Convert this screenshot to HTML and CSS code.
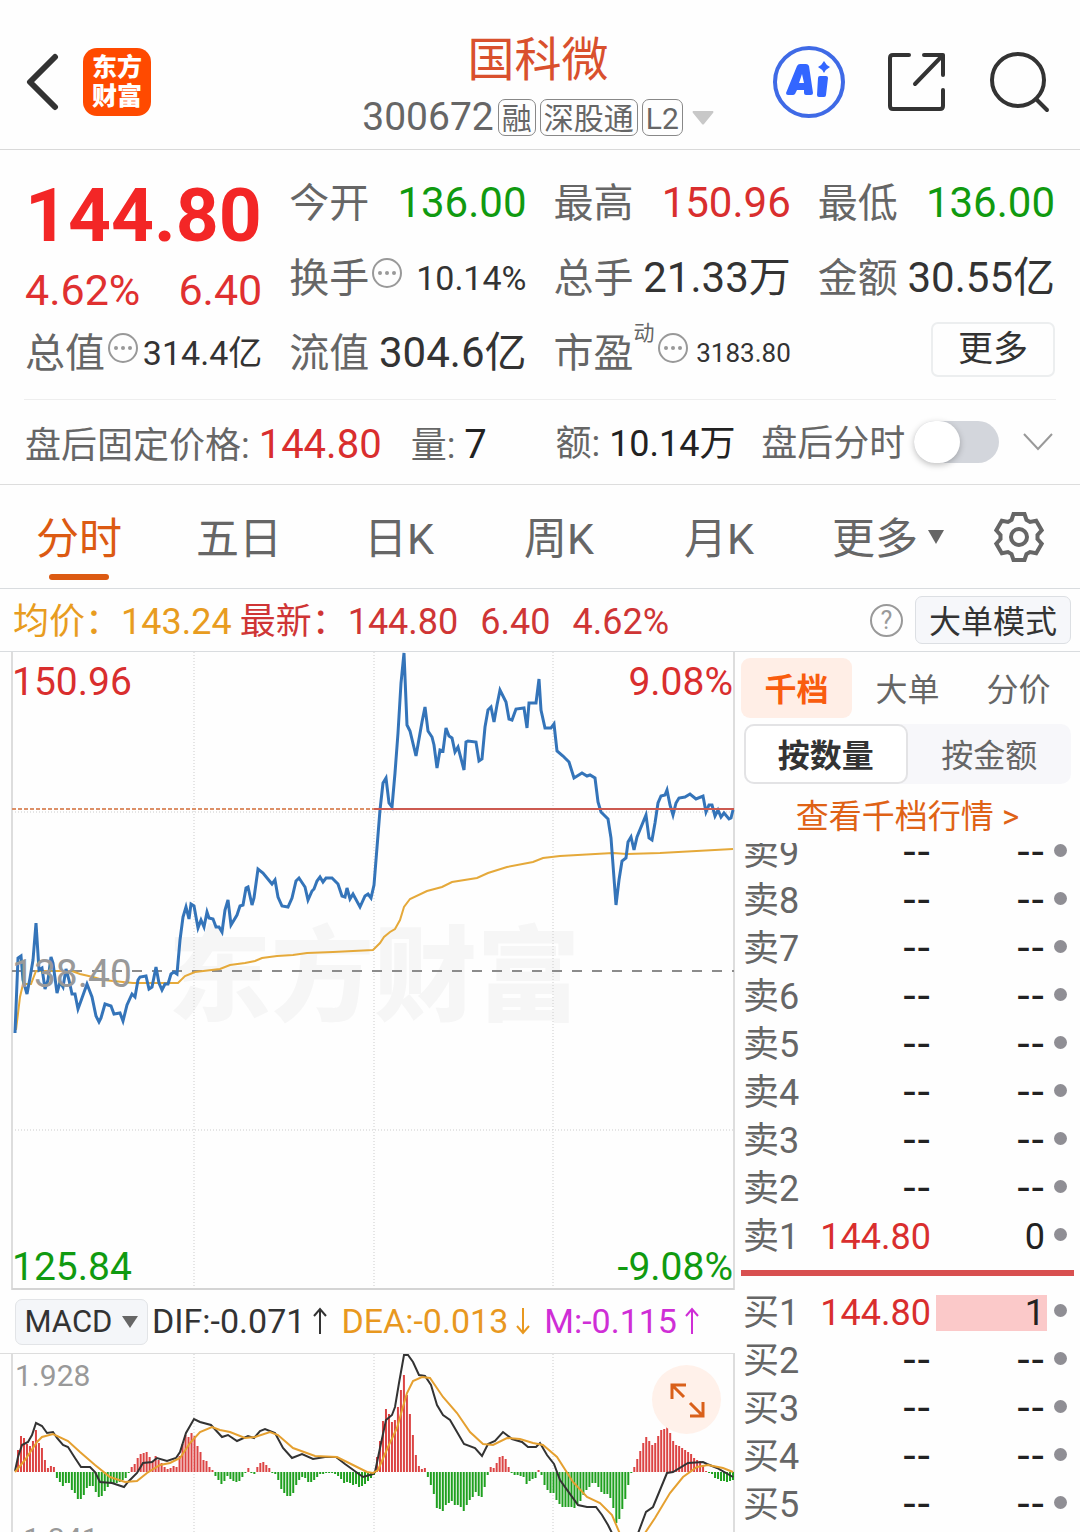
FILE: index.html
```html
<!DOCTYPE html>
<html lang="zh-CN">
<head>
  <meta charset="UTF-8">
  <meta name="viewport" content="width=device-width, initial-scale=1.0">
  <title>国科微 300672</title>
  <link rel="stylesheet" href="styles.css">
</head>
<body>

<header class="topbar">
  <div class="topbar-left">
    <button class="icon-btn" aria-label="返回">
      <svg width="36" height="58" viewBox="0 0 36 58"><path d="M31 4L6 29L31 54" fill="none" stroke="#333" stroke-width="6" stroke-linecap="round" stroke-linejoin="round"/></svg>
    </button>
    <a href="#" class="logo">东方<br>财富</a>
  </div>
  <div class="topbar-title">
    <h1>国科微</h1>
    <div class="stock-code">
      <span class="code">300672</span>
      <span class="tag">融</span>
      <span class="tag">深股通</span>
      <span class="tag">L2</span>
      <svg class="code-arrow" width="22" height="14" viewBox="0 0 22 14"><path d="M1 0H21Q22 1 21 2L12 13Q11 14 10 13L1 2Q0 1 1 0Z" fill="#c8c8c8"/></svg>
    </div>
  </div>
  <div class="topbar-right">
    <button class="icon-btn" aria-label="AI">
      <svg width="74" height="74" viewBox="0 0 74 74">
        <circle cx="37" cy="37" r="34" fill="none" stroke="#3f6ae6" stroke-width="4"/>
        <path fill="#3366ff" fill-rule="evenodd" d="M25 21Q26 19 28 19H34Q36 19 37 21L41 48Q41 50 39 50H34Q32 50 32 48V45H25L23 49Q22 50 21 50H16Q14 50 14 48ZM30 29L27 38H32Z"/>
        <path fill="#3366ff" d="M48 31H54Q56 31 56 33L54 50Q54 52 52 52H47Q45 52 45 50L46 33Q46 31 48 31Z"/>
        <path fill="#3366ff" d="M52 16Q54 20 58 22Q54 24 52 28Q50 24 46 22Q50 20 52 16Z"/>
      </svg>
    </button>
    <button class="icon-btn" aria-label="分享">
      <svg width="60" height="60" viewBox="0 0 60 60" fill="none" stroke="#333" stroke-width="4" stroke-linecap="round" stroke-linejoin="round">
        <path d="M22 3H6Q3 3 3 6V54Q3 57 6 57H53Q56 57 56 54V38"/>
        <path d="M37 3H56V23M56 3L28 32"/>
      </svg>
    </button>
    <button class="icon-btn" aria-label="搜索">
      <svg width="64" height="64" viewBox="0 0 64 64" fill="none" stroke="#333" stroke-width="4" stroke-linecap="round">
        <circle cx="30" cy="30" r="26"/>
        <path d="M48 49L59 60"/>
      </svg>
    </button>
  </div>
</header>

<section class="quote">
  <div class="price-block">
    <div class="price">144.80</div>
    <div class="change"><span>4.62%</span><span>6.40</span></div>
  </div>
  <div class="stat"><span class="label">今开</span><span class="value down">136.00</span></div>
  <div class="stat"><span class="label">最高</span><span class="value up">150.96</span></div>
  <div class="stat"><span class="label">最低</span><span class="value down">136.00</span></div>
  <div class="stat"><span class="label">换手</span><span class="dots"></span><span class="value mid">10.14%</span></div>
  <div class="stat"><span class="label">总手</span><span class="value">21.33万</span></div>
  <div class="stat"><span class="label">金额</span><span class="value">30.55亿</span></div>
  <div class="stat"><span class="label">总值</span><span class="dots"></span><span class="value mid">314.4亿</span></div>
  <div class="stat"><span class="label">流值</span><span class="value">304.6亿</span></div>
  <div class="stat"><span class="label">市盈</span><sup>动</sup><span class="dots"></span><span class="value small">3183.80</span></div>
  <div class="stat"><button class="more-btn">更多</button></div>
</section>

<section class="after-hours">
  <div class="after-item">盘后固定价格: <b class="up">144.80</b></div>
  <div class="after-item">量: <b>7</b></div>
  <div class="after-item">额: <b class="amount">10.14万</b></div>
  <div class="after-switch">
    <label for="after" class="after-item">盘后分时</label>
    <input type="checkbox" id="after" class="switch">
    <button class="icon-btn" aria-label="展开">
      <svg width="30" height="18" viewBox="0 0 30 18"><path d="M1 1L15 16L29 1" fill="none" stroke="#999" stroke-width="2"/></svg>
    </button>
  </div>
</section>

<nav class="tabs">
  <button class="tab active">分时</button>
  <button class="tab">五日</button>
  <button class="tab">日K</button>
  <button class="tab">周K</button>
  <button class="tab">月K</button>
  <button class="tab">更多<svg class="tab-arrow" width="16" height="14" viewBox="0 0 16 14"><path d="M0 0H16L8 14Z" fill="#666"/></svg></button>
  <button class="tab settings" aria-label="设置">
    <svg width="54" height="54" viewBox="0 0 54 54" fill="none" stroke="#666" stroke-width="4">
      <path d="M19.5 10L21.5 4H32.5L34.5 10L38 12L44.2 10.7L49.7 20.3L45.5 25V29L49.7 33.7L44.2 43.3L38 42L34.5 44L32.5 50H21.5L19.5 44L16 42L9.8 43.3L4.3 33.7L8.5 29V25L4.3 20.3L9.8 10.7L16 12Z"/>
      <circle cx="27" cy="27" r="8"/>
    </svg>
  </button>
</nav>

<section class="info-bar">
  <span class="avg">均价：143.24</span>
  <span class="latest">最新：144.80</span>
  <span class="latest">6.40</span>
  <span class="latest">4.62%</span>
  <button class="help" aria-label="帮助">?</button>
  <button class="mode-btn">大单模式</button>
</section>

<main class="board">
  <div class="charts">
    <svg class="price-chart" viewBox="0 0 735 638">
      <text x="168" y="361" class="watermark">东方财富</text>
      <g class="grid-lines">
        <path d="M194 0V638M374 0V638M553 0V638M12 160H734M12 478H734"/>
      </g>
      <path d="M12 0V638M734 0V638" stroke="#ddd" stroke-width="2"/>
      <path d="M12 637H734" stroke="#d4d4d4" stroke-width="2"/>
      <path d="M12 319H734" stroke="#8c8c8c" stroke-width="2" stroke-dasharray="10 10"/>
      <polyline class="avg-line" points="16,378 20,345 23,332 31,332 36,319 72,319 80,322 93,325 103,328 113,329 133,331 178,331 185,324 195,320 220,317 230,313 245,311 255,309 262,306 277,304 293,303 307,301 333,300 373,298 380,291 384,285 390,280 395,277 400,268 404,255 410,247 427,239 442,235 452,230 477,226 488,221 507,215 533,210 543,206 560,204 613,201 627,202 660,201 733,197"/>
      <polyline class="price-line" points="15,381 18,306 21,304 23,328 27,342 30,326 33,308 36,271 39,318 42,316 45,337 48,328 51,305 53,311 57,341 60,330 63,335 66,317 69,328 72,342 75,342 78,357 82,346 87,332 92,345 96,364 99,370 101,366 105,352 111,354 114,362 120,361 123,369 127,353 132,342 135,345 138,328 140,325 146,324 149,337 152,335 156,315 159,331 162,338 165,332 168,332 171,322 174,320 177,322 180,288 183,265 186,255 189,267 191,252 194,254 198,276 201,268 204,275 207,260 209,266 213,267 216,275 219,275 222,280 225,258 228,248 231,273 237,263 240,254 243,253 246,236 248,235 252,253 254,246 258,217 263,221 272,232 275,228 278,245 282,254 288,255 292,246 296,229 299,226 305,235 308,248 312,239 314,237 317,229 320,225 323,230 326,226 332,226 338,232 342,244 345,245 347,236 350,247 353,242 360,255 365,244 368,242 371,246 374,233 380,158 383,131 386,126 389,151 392,155 395,121 398,81 401,31 404,1 407,73 410,79 416,104 422,70 425,55 428,79 432,85 434,93 437,116 440,98 443,99 446,76 449,84 452,86 455,100 458,95 464,118 466,90 468,89 476,90 479,109 482,107 485,75 488,58 491,55 494,70 497,53 500,38 506,50 509,67 512,68 516,57 524,56 527,76 529,51 536,51 539,27 541,58 545,76 551,76 554,72 557,99 563,104 569,110 574,126 582,121 587,124 590,123 595,126 598,150 601,160 608,167 611,186 616,253 619,228 622,209 626,206 628,190 631,185 634,198 637,185 646,163 649,186 652,188 655,171 658,151 661,144 665,143 667,138 670,153 673,163 676,151 679,146 685,145 690,142 696,147 703,144 706,160 709,153 712,153 715,164 718,158 721,165 724,161 729,167 731,166 733,158"/>
      <path d="M12 157H374" stroke="#dc9068" stroke-width="2" stroke-dasharray="4 2"/>
      <path d="M374 157H734" stroke="#cc5a50" stroke-width="2"/>
      <text x="12" y="43" class="axis up">150.96</text>
      <text x="12" y="335" class="axis flat">138.40</text>
      <text x="12" y="628" class="axis down">125.84</text>
      <text x="733" y="43" class="axis end up">9.08%</text>
      <text x="733" y="628" class="axis end down">-9.08%</text>
    </svg>

    <div class="macd-bar">
      <button class="macd-btn">MACD<svg width="16" height="12" viewBox="0 0 16 12"><path d="M0 0H16L8 12Z" fill="#666"/></svg></button>
      <span class="dif">DIF:-0.071<svg width="16" height="28" viewBox="0 0 16 28"><path d="M8 27V2M2 9L8 2L14 9"/></svg></span>
      <span class="dea">DEA:-0.013<svg width="16" height="28" viewBox="0 0 16 28"><path d="M8 1V26M2 19L8 26L14 19"/></svg></span>
      <span class="m">M:-0.115<svg width="16" height="28" viewBox="0 0 16 28"><path d="M8 27V2M2 9L8 2L14 9"/></svg></span>
    </div>

    <div class="macd-panel">
      <svg class="macd-chart" viewBox="0 0 735 178">
        <path class="grid-lines" d="M194 0V178M374 0V178M553 0V178"/>
        <path d="M12 0V178M734 0V178" stroke="#ddd" stroke-width="2"/>
        <g id="macd-bars"></g>
        <polyline class="dif-line" points="15,117 18,103 22,91 28,88 32,81 36,69 42,72 47,79 53,78 57,84 63,91 68,93 75,104 81,113 90,113 95,118 100,128 112,129 124,133 128,128 137,119 143,109 152,108 157,104 167,107 176,104 180,98 186,79 194,65 200,68 211,71 222,83 228,81 237,87 248,82 254,84 260,77 265,75 275,79 283,94 292,104 302,100 313,105 325,103 336,103 345,110 363,123 373,120 375,118 380,94 386,66 392,61 395,53 399,29 404,1 408,1 413,8 419,21 425,22 431,31 437,51 443,61 450,66 464,90 475,94 482,102 488,90 495,87 503,78 512,85 522,88 528,93 536,93 540,89 547,101 554,110 560,126 578,151 587,153 596,153 602,161 608,171 612,179 637,182 646,158 653,153 667,119 673,118 688,109 703,108 707,110 717,114 733,123"/>
        <polyline class="dea-line" points="15,118 25,106 37,88 42,83 53,80 68,87 80,98 95,111 110,123 125,128 137,127 147,119 160,111 170,109 180,104 190,89 200,78 212,73 220,76 230,78 245,84 255,83 270,78 278,81 293,94 315,102 337,103 353,111 367,118 373,119 378,116 388,93 397,74 402,56 407,39 413,27 422,23 430,24 443,43 457,59 470,78 483,90 493,91 507,84 520,85 533,89 543,91 557,103 573,128 587,143 600,149 612,161 620,180 643,182 655,164 670,139 683,123 697,113 708,111 723,114 733,118"/>
        <text x="15" y="32" class="macd-axis">1.928</text>
        <text x="15" y="195" class="macd-axis">-1.341</text>
      </svg>
      <button class="expand-btn" aria-label="全屏">
        <svg width="36" height="36" viewBox="0 0 36 36" fill="none" stroke="#d9601a" stroke-width="3"><path d="M17 3H3V17M3 3L15 15M21 34H34V20M34 34L21 21"/></svg>
      </button>
    </div>
  </div>

  <aside class="depth">
    <div class="depth-tabs">
      <button class="active">千档</button>
      <button>大单</button>
      <button>分价</button>
    </div>
    <div class="segment">
      <button class="active">按数量</button>
      <button>按金额</button>
    </div>
    <a href="#" class="depth-link">查看千档行情 &gt;</a>
    <div class="sell-wrap">
      <table class="orders sell">
        <tr><th>卖9</th><td class="none">--</td><td class="none"><span>--</span></td><td><i></i></td></tr>
        <tr><th>卖8</th><td class="none">--</td><td class="none"><span>--</span></td><td><i></i></td></tr>
        <tr><th>卖7</th><td class="none">--</td><td class="none"><span>--</span></td><td><i></i></td></tr>
        <tr><th>卖6</th><td class="none">--</td><td class="none"><span>--</span></td><td><i></i></td></tr>
        <tr><th>卖5</th><td class="none">--</td><td class="none"><span>--</span></td><td><i></i></td></tr>
        <tr><th>卖4</th><td class="none">--</td><td class="none"><span>--</span></td><td><i></i></td></tr>
        <tr><th>卖3</th><td class="none">--</td><td class="none"><span>--</span></td><td><i></i></td></tr>
        <tr><th>卖2</th><td class="none">--</td><td class="none"><span>--</span></td><td><i></i></td></tr>
        <tr><th>卖1</th><td class="up">144.80</td><td><span>0</span></td><td><i></i></td></tr>
      </table>
    </div>
    <div class="split"></div>
    <table class="orders">
      <tr><th>买1</th><td class="up">144.80</td><td><span class="filled">1</span></td><td><i></i></td></tr>
      <tr><th>买2</th><td class="none">--</td><td class="none"><span>--</span></td><td><i></i></td></tr>
      <tr><th>买3</th><td class="none">--</td><td class="none"><span>--</span></td><td><i></i></td></tr>
      <tr><th>买4</th><td class="none">--</td><td class="none"><span>--</span></td><td><i></i></td></tr>
      <tr><th>买5</th><td class="none">--</td><td class="none"><span>--</span></td><td><i></i></td></tr>
    </table>
  </aside>
</main>

<script src="script.js"></script>
</body>
</html>
```
FILE: styles.css
```css
* {
  box-sizing: border-box;
}

body {
  margin: 0;
  background-color: #fefefe;
  color: #333;
  font-family: Roboto, 'Noto Sans CJK SC', sans-serif;
  line-height: 1.2;
}

button {
  padding: 0;
  border: none;
  background: none;
  color: inherit;
  font-family: inherit;
  line-height: 1.2;
  cursor: pointer;
}

a {
  text-decoration: none;
}

svg {
  display: block;
}

.up {
  color: #d92e2e;
  fill: #d92e2e;
}

.down {
  color: #109a10;
  fill: #109a10;
}

/* Header */
.topbar {
  display: grid;
  grid-template-columns: 1fr auto 1fr;
  align-items: center;
  height: 150px;
  padding: 14px 28px 0 24px;
  border-bottom: 1px solid #d9d9d9;
}

.topbar-left {
  display: flex;
  align-items: center;
  gap: 23px;
}

.logo {
  width: 68px;
  height: 68px;
  border-radius: 14px;
  background-color: #ff4a00;
  color: #fff;
  font-size: 25px;
  font-weight: 900;
  line-height: 29px;
  padding-top: 5px;
  text-align: center;
}

.topbar-title {
  padding-top: 14px;
  text-align: center;
}

.topbar-title h1 {
  margin: 0;
  color: #d9502d;
  font-size: 47px;
  font-weight: 400;
  line-height: 58px;
}

.stock-code {
  display: flex;
  align-items: center;
  gap: 4px;
  height: 58px;
  color: #666;
}

.code {
  font-size: 39px;
}

.tag {
  height: 37px;
  padding: 0 3px;
  border: 1px solid #888;
  border-radius: 7px;
  font-size: 30px;
  line-height: 38px;
}

.code-arrow {
  margin-left: 5px;
}

.topbar-right {
  display: flex;
  justify-content: flex-end;
  align-items: center;
  gap: 41px;
}

/* Quote */
.quote {
  display: grid;
  grid-template-columns: repeat(4, minmax(0, 1fr));
  grid-auto-rows: 75px;
  column-gap: 27px;
  margin: 0 24px;
  padding: 16px 1px 8px;
  border-bottom: 1px solid #eee;
  white-space: nowrap;
}

.price-block {
  grid-row: span 2;
  color: #e03030;
}

.price {
  color: #f32626;
  font-size: 75px;
  font-weight: 700;
  line-height: 98px;
}

.change {
  display: flex;
  justify-content: space-between;
  font-size: 43px;
  line-height: 52px;
}

.stat {
  display: flex;
  align-items: center;
}

.label {
  color: #666;
  font-size: 40px;
}

.value {
  margin-left: auto;
  font-size: 42px;
}

.value.mid {
  font-size: 34px;
}

.value.small {
  font-size: 26px;
}

.stat sup {
  align-self: flex-start;
  color: #666;
  font-size: 21px;
  line-height: 34px;
}

.dots {
  display: flex;
  align-items: center;
  justify-content: center;
  width: 30px;
  height: 30px;
  margin: 0 0 12px 3px;
  border: 2px solid #999;
  border-radius: 50%;
}

.dots::before {
  content: '';
  width: 4px;
  height: 4px;
  border-radius: 50%;
  background-color: #999;
  box-shadow: -7px 0 #999, 7px 0 #999;
}

.more-btn {
  width: 124px;
  height: 55px;
  margin: 0 0 8px auto;
  border: 2px solid #eceeef;
  border-radius: 7px;
  font-size: 35px;
}

/* After hours */
.after-hours {
  display: grid;
  grid-template-columns: 386fr 145fr 206fr 294fr;
  align-items: center;
  height: 85px;
  padding: 0 25px;
  border-bottom: 1px solid #ddd;
  color: #666;
  font-size: 36px;
  white-space: nowrap;
}

.after-item {
  padding-top: 6px;
}

.after-hours b {
  color: #222;
  font-size: 40px;
  font-weight: 400;
}

.after-hours .up {
  color: #d92e2e;
}

.after-hours .amount {
  font-size: 36px;
}

.after-switch {
  display: flex;
  align-items: center;
}

.switch {
  appearance: none;
  width: 85px;
  height: 42px;
  margin: 0 24px 0 9px;
  border-radius: 21px;
  background-color: #d3d6dc;
}

.switch::before {
  content: '';
  display: block;
  width: 46px;
  height: 42px;
  border-radius: 21px;
  background-color: #fff;
  box-shadow: 0 2px 6px rgba(0, 0, 0, 0.25);
}

/* Period tabs */
.tabs {
  display: grid;
  grid-template-columns: repeat(5, 160fr) 178fr 82fr;
  height: 104px;
  padding-right: 20px;
  border-bottom: 1px solid #d9dcdf;
}

.tab {
  position: relative;
  display: flex;
  align-items: center;
  justify-content: center;
  gap: 10px;
  padding: 7px 2px 0 0;
  color: #666;
  font-size: 43px;
}

.tab.settings {
  padding: 0;
}

.tab-arrow {
  margin-bottom: 7px;
}

.tab.active {
  color: #dc5a12;
}

.tab.active::after {
  content: '';
  position: absolute;
  bottom: 8px;
  left: calc(50% - 31px);
  width: 60px;
  height: 6px;
  border-radius: 3px;
  background-color: #dc5a12;
}

/* Average / latest price line */
.info-bar {
  display: flex;
  align-items: center;
  height: 63px;
  padding: 0 9px 0 13px;
  border-bottom: 1px solid #d9dcdf;
  font-size: 36px;
}

.avg,
.latest {
  padding-top: 6px;
}

.avg {
  margin-right: 8px;
  color: #e89c20;
}

.latest {
  margin-right: 22px;
  color: #cf3535;
}

.help {
  width: 33px;
  height: 33px;
  margin: 0 12px 0 auto;
  border: 2px solid #999;
  border-radius: 50%;
  color: #999;
  font-size: 25px;
}

.mode-btn {
  width: 156px;
  height: 48px;
  padding-top: 5px;
  border: 1px solid #dcdfe3;
  border-radius: 7px;
  background-color: #f6f7fa;
  font-size: 32px;
}

/* Charts */
.board {
  display: grid;
  grid-template-columns: 735fr 345fr;
  align-items: start;
}

.price-chart,
.macd-chart {
  width: 100%;
  fill: none;
}

.watermark {
  fill: #f6f6f6;
  font-size: 103px;
  font-weight: 900;
}

.grid-lines {
  stroke: #ccc;
  stroke-dasharray: 1 2;
}

.price-line,
.avg-line {
  stroke: #3474b9;
  stroke-width: 3;
}

.avg-line {
  stroke: #e5a93a;
  stroke-width: 2;
}

.axis {
  font-size: 39px;
}

.axis.end {
  text-anchor: end;
}

.axis.flat {
  fill: #999;
}

.macd-bar {
  display: flex;
  align-items: center;
  height: 64px;
  padding-left: 15px;
  border-bottom: 1px solid #ddd;
  font-size: 34px;
}

.macd-bar span {
  display: flex;
  align-items: center;
  gap: 7px;
  margin-right: 13px;
}

.macd-bar span svg {
  fill: none;
  stroke: currentColor;
  stroke-width: 2;
}

.macd-btn {
  display: flex;
  align-items: center;
  justify-content: center;
  gap: 10px;
  width: 133px;
  height: 46px;
  margin-right: 4px;
  border: 1px solid #e2e4e7;
  border-radius: 7px;
  background-color: #f4f6f9;
  font-size: 31px;
}

.dea {
  color: #e8981f;
}

.m {
  color: #cf2ed6;
}

.macd-panel {
  position: relative;
}

.dif-line {
  stroke: #333;
  stroke-width: 2;
}

.dea-line {
  stroke: #e5a030;
  stroke-width: 2;
}

.bar-up {
  fill: #dc4444;
}

.bar-down {
  fill: #1fa01f;
}

.macd-axis {
  fill: #999;
  font-size: 30px;
}

.expand-btn {
  position: absolute;
  top: 11px;
  right: 14px;
  display: flex;
  align-items: center;
  justify-content: center;
  width: 69px;
  height: 69px;
  border-radius: 50%;
  background-color: #fff1ea;
}

/* Order book */
.depth {
  padding: 6px 6px 0;
}

.depth-tabs {
  display: grid;
  grid-template-columns: repeat(3, 1fr);
}

.depth-tabs button {
  height: 60px;
  padding-top: 5px;
  border-radius: 9px;
  color: #666;
  font-size: 32px;
}

.depth-tabs .active {
  background-color: #ffeee6;
  color: #f95c0e;
  font-weight: 700;
}

.segment {
  display: grid;
  grid-template-columns: 1fr 1fr;
  height: 60px;
  margin: 6px 3px 0;
  border-radius: 10px;
  background-color: #f7f7fa;
}

.segment button {
  padding-top: 5px;
  border: 2px solid transparent;
  border-radius: 10px;
  color: #666;
  font-size: 32px;
}

.segment .active {
  border-color: #e3e3e5;
  background-color: #fff;
  color: #333;
  font-weight: 700;
}

.depth-link {
  display: block;
  height: 59px;
  color: #df6216;
  font-size: 33px;
  line-height: 66px;
  text-align: center;
}

.sell-wrap {
  overflow: hidden;
}

.orders {
  width: 100%;
  table-layout: fixed;
  border-collapse: collapse;
  color: #222;
  font-size: 36px;
  line-height: 36px;
}

.orders.sell {
  margin-top: -14px;
}

.orders th,
.orders td {
  height: 48px;
  padding: 0;
  text-align: right;
}

.orders th {
  width: 62px;
  padding-left: 2px;
  color: #666;
  font-weight: 400;
  text-align: left;
}

.orders td:nth-child(3) {
  width: 116px;
  padding-left: 5px;
}

.orders td:nth-child(4) {
  width: 27px;
}

.orders .none {
  padding-bottom: 4px;
  font-family: 'DejaVu Sans', sans-serif;
  font-size: 40px;
}

.orders span {
  display: block;
  padding-right: 2px;
}

.orders .filled {
  background-color: #fbc9c9;
}

.orders i {
  display: block;
  width: 13px;
  height: 13px;
  margin: 0 0 6px 7px;
  border-radius: 50%;
  background-color: #8f8e94;
}

.split {
  height: 6px;
  margin: 9px 0 13px;
  background-color: #d85050;
}
```
FILE: script.js
```js
// MACD histogram, one value per minute
var macd = [
  22, 36, 34, 28, 26, 31, 42, 29, 24, 12, 4, 6, 5, -6, -10, -14, -11, -11, -18, -21,
  -27, -27, -23, -16, -14, -14, -20, -25, -24, -19, -15, -11, -12, -11, -10, -8, -6, 0, 5, 8,
  14, 18, 19, 20, 15, 11, 16, 12, 9, 5, 3, 4, 6, 5, 16, 28, 37, 35, 39, 36,
  26, 20, 12, 11, 5, 2, -4, -8, -12, -9, -4, -7, -9, -10, -9, -5, 0, 4, 0, -2,
  5, 9, 10, 7, 4, 0, -2, -8, -17, -21, -24, -24, -21, -13, -8, -5, -6, -10, -10, -8,
  -5, -2, -2, 0, 0, 0, -2, -4, -7, -11, -10, -11, -13, -12, -15, -14, -12, -9, -6, -3,
  15, 31, 51, 63, 58, 50, 52, 65, 82, 97, 77, 58, 37, 17, 6, 3, 4, -5, -13, -22,
  -36, -37, -39, -33, -31, -29, -33, -33, -35, -39, -33, -28, -25, -20, -24, -25, -15, -3, 5, 4,
  9, 15, 16, 13, 5, -1, -3, -3, -4, -5, -12, -9, -7, -6, 2, -3, -13, -18, -21, -21,
  -28, -32, -35, -35, -35, -35, -36, -32, -29, -23, -18, -15, -11, -11, -15, -20, -22, -22, -26, -36,
  -51, -47, -37, -27, -13, 0, 5, 13, 21, 29, 35, 31, 27, 29, 36, 42, 43, 45, 39, 31,
  27, 26, 24, 22, 20, 18, 14, 12, 11, 7, 1, 0, -2, -6, -7, -9, -9, -10, -9, -8
];

var bars = document.getElementById('macd-bars');
var zero = 118;
var step = (733 - 18) / (macd.length - 1);

macd.forEach(function (value, i) {
  var rect = document.createElementNS('http://www.w3.org/2000/svg', 'rect');
  rect.setAttribute('x', 17 + i * step);
  rect.setAttribute('y', value > 0 ? zero - value : zero);
  rect.setAttribute('width', 2);
  rect.setAttribute('height', Math.max(Math.abs(value), 1));
  rect.setAttribute('class', value > 0 ? 'bar-up' : 'bar-down');
  bars.appendChild(rect);
});
```
